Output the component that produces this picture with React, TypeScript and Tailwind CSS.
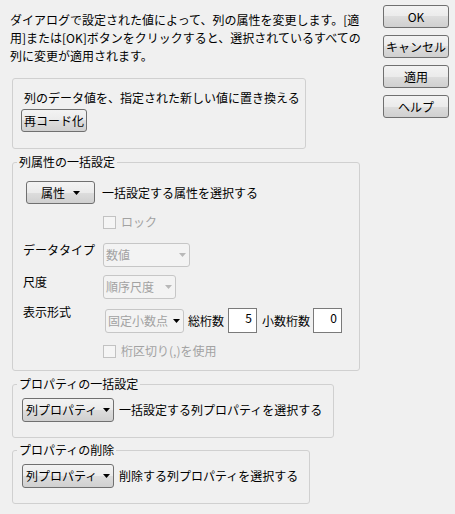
import React from "react";

// Win7-ish push button
const Btn = ({
  children,
  className = "",
}: {
  children: React.ReactNode;
  className?: string;
}) => (
  <button
    className={`flex items-center justify-center rounded-[3px] border border-[#707070] bg-[linear-gradient(#f3f3f3,#ebebeb_50%,#dddddd_50%,#d0d0d0)] text-[12px] leading-none text-black ${className}`}
  >
    {children}
  </button>
);

const Arrow = ({ color = "#000" }: { color?: string }) => (
  <svg width="7" height="4" viewBox="0 0 7 4">
    <path d="M0 0h7L3.5 4z" fill={color} />
  </svg>
);

const Combo = ({
  label,
  className = "",
  darkArrow = false,
}: {
  label: string;
  className?: string;
  darkArrow?: boolean;
}) => (
  <div
    className={`flex h-[24px] items-center justify-between rounded-[3px] border border-[#c6c6c6] bg-[#f3f3f3] pl-[2px] pr-[3px] text-[12px] text-[#a2a2a2] ${className}`}
  >
    <span>{label}</span>
    <Arrow color={darkArrow ? "#000" : "#b8b8b8"} />
  </div>
);

const Check = ({ label }: { label: string }) => (
  <div className="flex items-center gap-[5px] text-[12px] text-[#a2a2a2]">
    <div className="h-[13px] w-[13px] border border-[#c2c2c2] bg-[#f5f5f5]" />
    <span>{label}</span>
  </div>
);

const Group = ({
  title,
  className = "",
  children,
}: {
  title: string;
  className?: string;
  children: React.ReactNode;
}) => (
  <fieldset
    className={`ml-[12px] rounded-[3px] border border-[#d0d0d0] ${className}`}
  >
    <legend className="ml-[4px] px-[2px] text-[12px] leading-[16px]">
      {title}
    </legend>
    {children}
  </fieldset>
);

const ValueBox = ({ value }: { value: string }) => (
  <div className="h-[25px] w-[29px] border border-[#7a7a7a] bg-white pr-[4px] pt-[1px] text-right text-[12px] leading-[16px]">
    {value}
  </div>
);

export default function App() {
  return (
    <div className="flex h-[514px] w-[455px] bg-[#f0f0f0] font-['Noto_Sans_CJK_JP',sans-serif] text-black">
      {/* left side */}
      <div className="w-[383px]">
        <p className="pl-[10px] pt-[11px] text-[12px] leading-[18px] whitespace-nowrap">
          ダイアログで設定された値によって、列の属性を変更します。[適
          <br />
          用]または[OK]ボタンをクリックすると、選択されているすべての
          <br />
          列に変更が適用されます。
        </p>

        <div className="ml-[12px] mt-[13px] h-[71px] w-[294px] rounded-[3px] border border-[#d0d0d0] pl-[11px] pt-[10px]">
          <p className="text-[12px] leading-[18px]">
            列のデータ値を、指定された新しい値に置き換える
          </p>
          <Btn className="-ml-[3px] mt-[2px] h-[23px] w-[66px]">再コード化</Btn>
        </div>

        <Group title="列属性の一括設定" className="mt-[5px] h-[217px] w-[348px]">
          <div className="ml-[13px] mt-[11px] flex items-center gap-[7px]">
            <Btn className="h-[23px] w-[69px] gap-[8px]">
              <span>属性</span>
              <Arrow />
            </Btn>
            <span className="text-[12px]">一括設定する属性を選択する</span>
          </div>

          <div className="ml-[90px] mt-[9px]">
            <Check label="ロック" />
          </div>

          <div className="mt-[12px] flex items-start text-[12px]">
            <span className="ml-[10px] mt-[-1px] w-[80px] leading-[16px]">
              データタイプ
            </span>
            <Combo label="数値" className="w-[87px]" />
          </div>

          <div className="mt-[8px] flex items-start text-[12px]">
            <span className="ml-[10px] mt-[-1px] w-[80px] leading-[16px]">
              尺度
            </span>
            <Combo label="順序尺度" className="w-[73px]" />
          </div>

          <div className="mt-[9px] flex items-start text-[12px]">
            <span className="ml-[10px] mt-[-4px] w-[82px] leading-[16px]">
              表示形式
            </span>
            <div className="flex items-center">
              <Combo label="固定小数点" darkArrow className="mt-[1px] w-[79px]" />
              <span className="ml-[4px] mr-[4px]">総桁数</span>
              <ValueBox value="5" />
              <span className="ml-[5px] mr-[3px]">小数桁数</span>
              <ValueBox value="0" />
            </div>
          </div>

          <div className="ml-[90px] mt-[9px]">
            <Check label="桁区切り(,)を使用" />
          </div>
        </Group>

        <Group title="プロパティの一括設定" className="mt-[5px] h-[62px] w-[322px]">
          <div className="ml-[9px] mt-[6px] flex items-center gap-[5px]">
            <Btn className="h-[24px] w-[92px] justify-start gap-[6px] pl-[3px]">
              <span>列プロパティ</span>
              <Arrow />
            </Btn>
            <span className="text-[12px]">一括設定する列プロパティを選択する</span>
          </div>
        </Group>

        <Group title="プロパティの削除" className="mt-[4px] h-[62px] w-[298px]">
          <div className="ml-[9px] mt-[6px] flex items-center gap-[5px]">
            <Btn className="h-[24px] w-[92px] justify-start gap-[6px] pl-[3px]">
              <span>列プロパティ</span>
              <Arrow />
            </Btn>
            <span className="text-[12px]">削除する列プロパティを選択する</span>
          </div>
        </Group>
      </div>

      {/* right buttons */}
      <div className="flex flex-col gap-[7px] pt-[5px]">
        <Btn className="h-[23px] w-[66px]">OK</Btn>
        <Btn className="h-[23px] w-[66px]">キャンセル</Btn>
        <Btn className="h-[23px] w-[66px]">適用</Btn>
        <Btn className="h-[23px] w-[66px]">ヘルプ</Btn>
      </div>
    </div>
  );
}
